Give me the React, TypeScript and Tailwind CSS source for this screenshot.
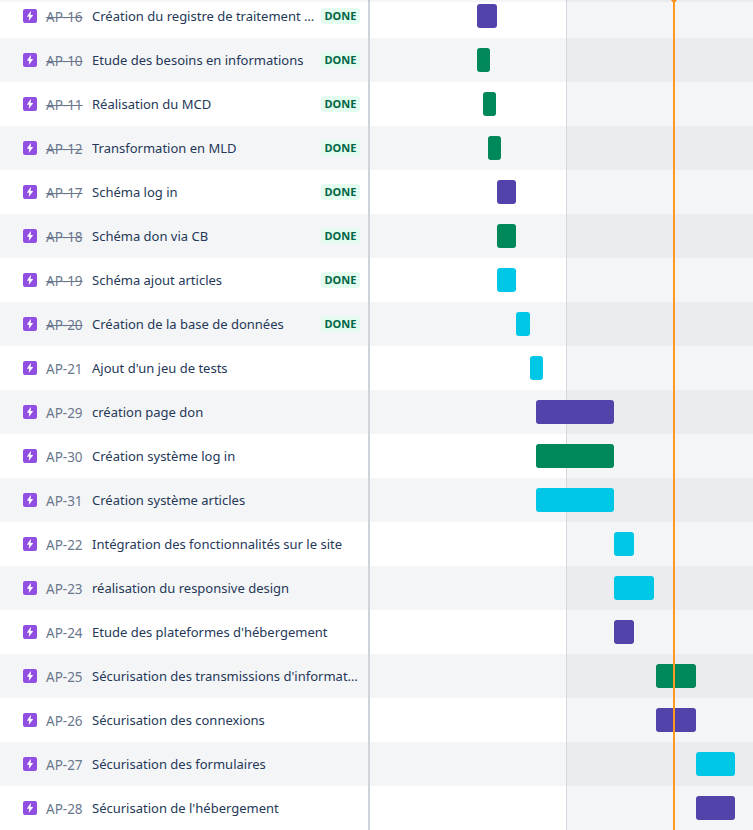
const PURPLE = "bg-[#5243aa]";
const GREEN = "bg-[#00875a]";
const CYAN = "bg-[#00c7e6]";

const issues = [
  { key: "AP-16", title: "Création du registre de traitement des données", done: true, left: 107, width: 20, color: PURPLE },
  { key: "AP-10", title: "Etude des besoins en informations", done: true, left: 107, width: 13, color: GREEN },
  { key: "AP-11", title: "Réalisation du MCD", done: true, left: 113, width: 13, color: GREEN },
  { key: "AP-12", title: "Transformation en MLD", done: true, left: 118, width: 13, color: GREEN },
  { key: "AP-17", title: "Schéma log in", done: true, left: 127, width: 19, color: PURPLE },
  { key: "AP-18", title: "Schéma don via CB", done: true, left: 127, width: 19, color: GREEN },
  { key: "AP-19", title: "Schéma ajout articles", done: true, left: 127, width: 19, color: CYAN },
  { key: "AP-20", title: "Création de la base de données", done: true, left: 146, width: 14, color: CYAN },
  { key: "AP-21", title: "Ajout d'un jeu de tests", done: false, left: 160, width: 13, color: CYAN },
  { key: "AP-29", title: "création page don", done: false, left: 166, width: 78, color: PURPLE },
  { key: "AP-30", title: "Création système log in", done: false, left: 166, width: 78, color: GREEN },
  { key: "AP-31", title: "Création système articles", done: false, left: 166, width: 78, color: CYAN },
  { key: "AP-22", title: "Intégration des fonctionnalités sur le site", done: false, left: 244, width: 20, color: CYAN },
  { key: "AP-23", title: "réalisation du responsive design", done: false, left: 244, width: 40, color: CYAN },
  { key: "AP-24", title: "Etude des plateformes d'hébergement", done: false, left: 244, width: 20, color: PURPLE },
  { key: "AP-25", title: "Sécurisation des transmissions d'informations", done: false, left: 286, width: 40, color: GREEN },
  { key: "AP-26", title: "Sécurisation des connexions", done: false, left: 286, width: 40, color: PURPLE },
  { key: "AP-27", title: "Sécurisation des formulaires", done: false, left: 326, width: 39, color: CYAN },
  { key: "AP-28", title: "Sécurisation de l'hébergement", done: false, left: 326, width: 39, color: PURPLE },
];

function EpicIcon() {
  return (
    <span className="flex h-[14px] w-[14px] shrink-0 items-center justify-center rounded-[2px] bg-[#904ee2]">
      <svg viewBox="0 0 14 14" className="h-[14px] w-[14px]">
        <path d="M7.6 2.3 4 7.4c-.1.2 0 .4.2.4h2.1l-.6 3.7c0 .2.2.3.4.1l3.8-5.2c.1-.2 0-.4-.2-.4H7.5L8 2.5c0-.3-.2-.4-.4-.2z" fill="#fff" />
      </svg>
    </span>
  );
}

function Row({ issue, index }: { issue: (typeof issues)[number]; index: number }) {
  const odd = index % 2 === 1;
  return (
    <div className="flex h-[44px]">
      <div className={`flex w-[368px] shrink-0 items-center pl-[23px] pr-[8px] ${odd ? "bg-[#f4f5f7]" : "bg-white"}`}>
        <EpicIcon />
        <span className={`ml-[9px] w-[46px] shrink-0 whitespace-nowrap pt-[2px] text-[13.5px] text-[#6b778c] ${issue.done ? "line-through" : ""}`}>
          {issue.key}
        </span>
        <span className="min-w-0 flex-1 truncate pt-[2px]">{issue.title}</span>
        {issue.done && (
          <span className="ml-[5px] flex h-[16px] w-[39px] shrink-0 items-center justify-center rounded-[3px] bg-[#e3fcef] text-[11px] font-bold text-[#006644]">
            DONE
          </span>
        )}
      </div>
      <div className="w-[2px] shrink-0 bg-[#cfd3da]" />
      <div className={`relative flex flex-1 ${odd ? "bg-[#f4f5f7]" : "bg-white"}`}>
        <div className="w-[196px] shrink-0" />
        <div className={`flex-1 border-l border-[#d3d6dc] ${odd ? "bg-[#ebecf0]" : "bg-[#f4f5f7]"}`} />
        <div
          className={`absolute top-[10px] h-[24px] rounded-[3px] ${issue.color}`}
          style={{ left: issue.left, width: issue.width }}
        />
      </div>
    </div>
  );
}

export default function App() {
  return (
    <div className="relative h-[830px] w-[753px] overflow-hidden bg-white font-['Noto_Sans',sans-serif] text-[13px] text-[#253858]">
      <div className="-mt-[6px]">
        {issues.map((issue, i) => (
          <Row key={issue.key} issue={issue} index={i} />
        ))}
      </div>
      <div className="absolute bottom-0 left-[673px] top-0 w-[2px] bg-[#ff991f]" />
      <div className="absolute left-[671px] top-0 h-0 w-0 border-x-[3px] border-t-[4px] border-x-transparent border-t-[#ff991f]" />
      <div className="absolute inset-x-0 top-0 h-[2px] bg-[#091e42]/[.04]" />
    </div>
  );
}
